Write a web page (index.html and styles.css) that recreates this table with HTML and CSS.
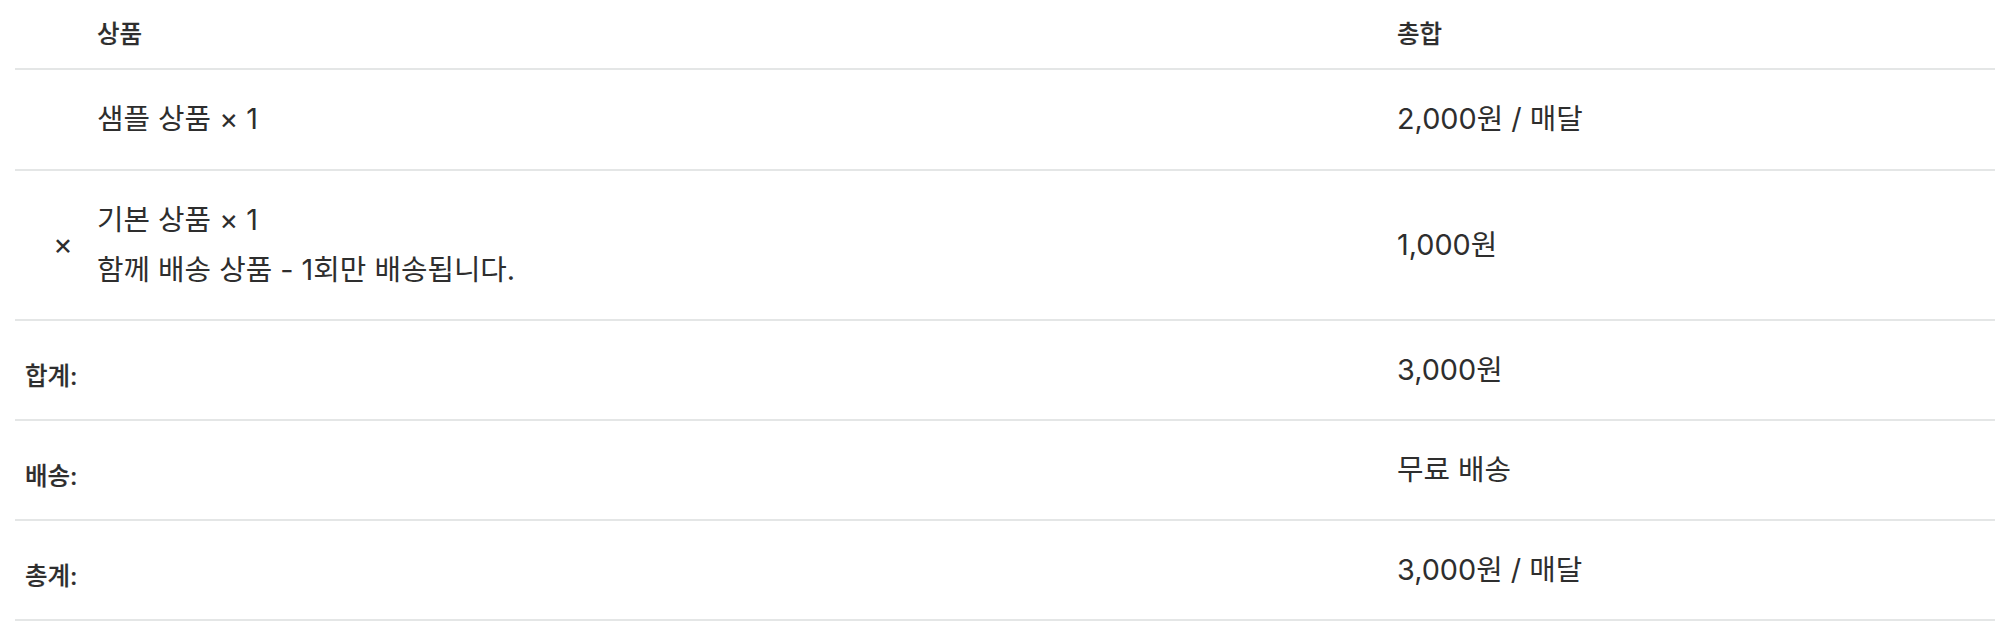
FILE: index.html
```html
<!DOCTYPE html>
<html lang="ko">
<head>
<meta charset="utf-8">
<title>주문 상품</title>
<link rel="stylesheet" href="styles.css">
</head>
<body>
<div class="cart">
  <table class="order-table">
    <colgroup>
      <col class="col-remove">
      <col class="col-name">
      <col class="col-total">
    </colgroup>
    <thead>
      <tr>
        <th class="cell-remove"></th>
        <th class="cell-name">상품</th>
        <th class="cell-total">총합</th>
      </tr>
    </thead>
    <tbody>
      <tr class="item item-single">
        <td class="cell-remove"></td>
        <td class="cell-name">샘플 상품 <span class="qty">× 1</span></td>
        <td class="cell-total">2,000원 / 매달</td>
      </tr>
      <tr class="item item-double">
        <td class="cell-remove"><span class="remove-x">×</span></td>
        <td class="cell-name">
          <div class="name-line">기본 상품 <span class="qty">× 1</span></div>
          <div class="name-line">함께 배송 상품 - 1회만 배송됩니다.</div>
        </td>
        <td class="cell-total">1,000원</td>
      </tr>
    </tbody>
    <tfoot>
      <tr class="sum">
        <th colspan="2" class="sum-label">합계:</th>
        <td class="cell-total">3,000원</td>
      </tr>
      <tr class="sum">
        <th colspan="2" class="sum-label">배송:</th>
        <td class="cell-total">무료 배송</td>
      </tr>
      <tr class="sum">
        <th colspan="2" class="sum-label">총계:</th>
        <td class="cell-total">3,000원 / 매달</td>
      </tr>
    </tfoot>
  </table>
</div>
</body>
</html>
```

FILE: styles.css
```css
html, body {
  margin: 0;
  padding: 0;
  background: #ffffff;
}

body {
  font-family: Inter, "Noto Sans CJK KR", sans-serif;
  color: #2e2e2e;
}

.cart {
  padding: 0 13px 0 15px;
}

.order-table {
  width: 100%;
  border-collapse: collapse;
  table-layout: fixed;
}

.col-remove { width: 72px; }
.col-total { width: 608px; }

.order-table th,
.order-table td {
  text-align: left;
  padding: 0 10px;
  border-bottom: 2px solid #e4e6e6;
}

/* header row */
.order-table thead th {
  font-size: 24.5px;
  font-weight: 500;
  line-height: 30px;
  padding-top: 19px;
  padding-bottom: 19px;
  vertical-align: top;
  -webkit-text-stroke: 0.2px currentColor;
}

/* body rows */
.order-table tbody td,
.order-table tfoot td {
  font-size: 28.8px;
  font-weight: 400;
  line-height: 50px;
  vertical-align: middle;
}

.item-single td {
  padding-top: 24px;
  padding-bottom: 25px;
}

.item-double td {
  padding-top: 24px;
  padding-bottom: 24px;
}

.order-table tbody td.cell-remove {
  padding-left: 38px;
  padding-right: 0;
}

.remove-x {
  font-size: 30px;
  line-height: 48px;
  display: inline-block;
}

/* footer rows */
.order-table tfoot td {
  padding-top: 24px;
  padding-bottom: 24px;
}

.order-table tfoot th.sum-label {
  font-size: 24.5px;
  font-weight: 500;
  line-height: 50px;
  padding-top: 30px;
  padding-bottom: 18px;
  vertical-align: top;
  -webkit-text-stroke: 0.2px currentColor;
}
```
